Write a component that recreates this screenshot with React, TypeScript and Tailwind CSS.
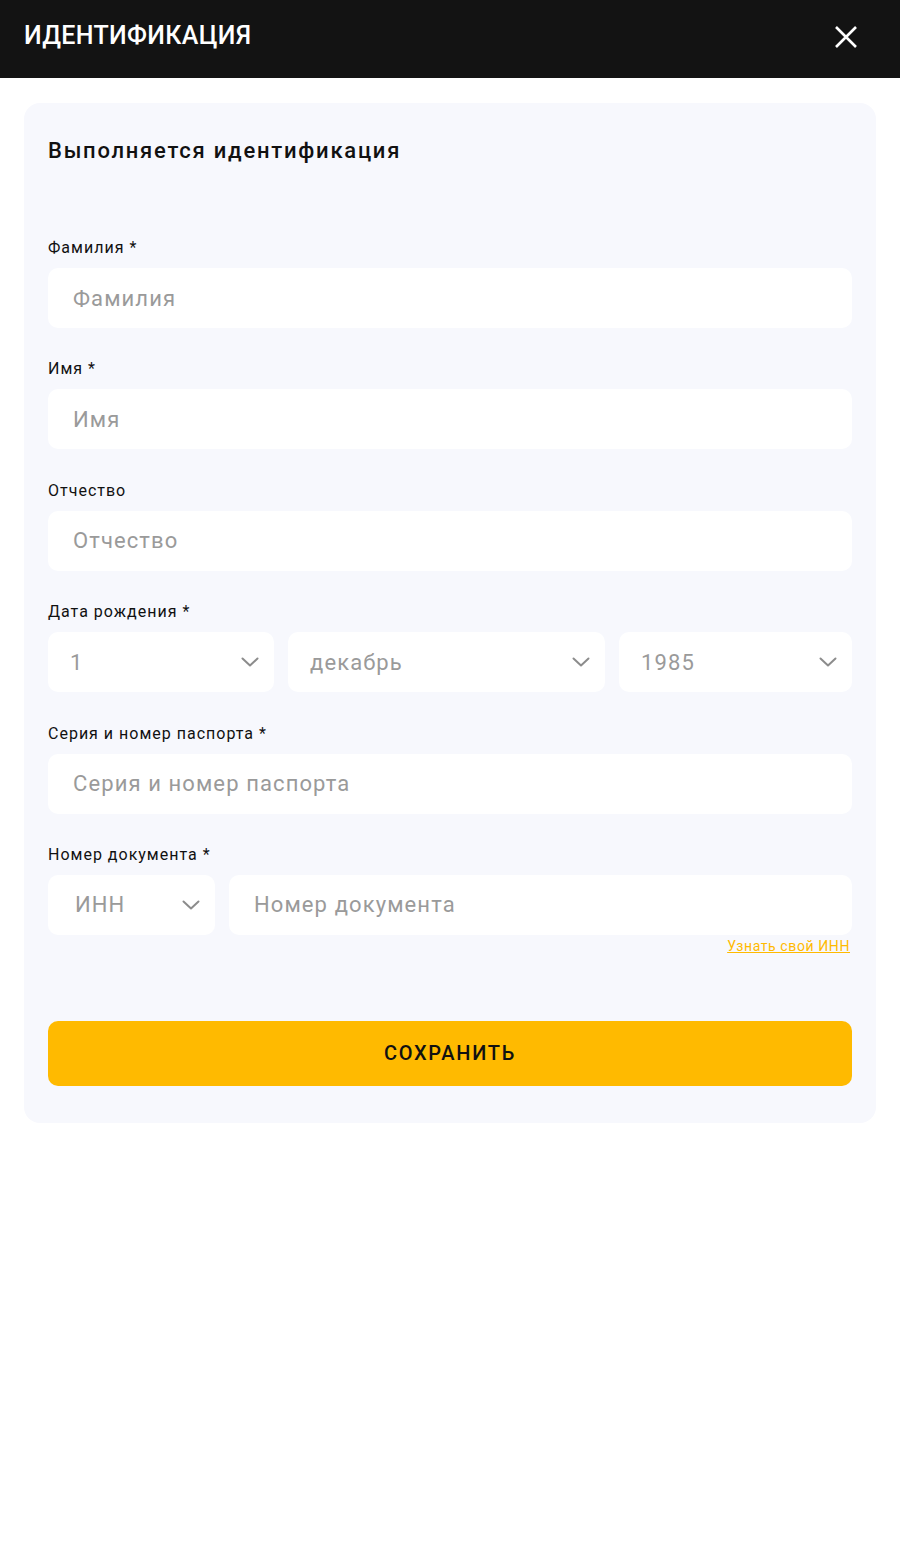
import React from "react";

const Chevron = () => (
  <svg width="18" height="18" viewBox="0 0 18 18" fill="none" className="shrink-0">
    <path d="M1.5 5.5L9 12.5L16.5 5.5" stroke="#8c8c8c" strokeWidth="2" strokeLinecap="round" strokeLinejoin="round" />
  </svg>
);

const Label = ({ children }: { children: React.ReactNode }) => (
  <label className="text-[16px] leading-[20px] tracking-[1px] text-[#111] mb-[10px]">{children}</label>
);

const Field = ({ label, placeholder }: { label: string; placeholder: string }) => (
  <div className="flex flex-col">
    <Label>{label}</Label>
    <div className="h-[60px] bg-white rounded-[10px] flex items-center px-[25px]">
      <span className="text-[22px] tracking-[1.1px] text-[#9a9a9a]">{placeholder}</span>
    </div>
  </div>
);

const Select = ({ value, className, pl = "pl-[22px]" }: { value: string; className: string; pl?: string }) => (
  <div className={`h-[60px] bg-white rounded-[10px] flex items-center justify-between pr-[15px] ${pl} ${className}`}>
    <span className="text-[22px] tracking-[1.1px] text-[#9a9a9a]">{value}</span>
    <Chevron />
  </div>
);

export default function App() {
  return (
    <div className="min-h-[1562px] bg-white" style={{ fontFamily: "Roboto, 'Liberation Sans', sans-serif" }}>
      <header className="h-[78px] bg-[#131313] flex items-center justify-between pl-[24px] pr-[42px]">
        <h1 className="text-white text-[25px] font-medium tracking-[0.35px] -mt-[6px]">ИДЕНТИФИКАЦИЯ</h1>
        <svg width="24" height="24" viewBox="0 0 24 24" fill="none" className="-mt-[4px]">
          <path d="M2 2L22 22M22 2L2 22" stroke="white" strokeWidth="2.6" />
        </svg>
      </header>

      <main className="px-[24px] pt-[25px]">
        <div className="bg-[#f7f8fd] rounded-[16px] px-[24px] pt-[33px] pb-[37px]">
          <h2 className="text-[22px] leading-[30px] font-medium text-[#111] tracking-[1.75px] mb-[73px]">
            Выполняется идентификация
          </h2>

          <div className="flex flex-col gap-[31.4px] -mt-[1px]">
            <Field label="Фамилия *" placeholder="Фамилия" />
            <Field label="Имя *" placeholder="Имя" />
            <Field label="Отчество" placeholder="Отчество" />

            <div className="flex flex-col">
              <Label>Дата рождения *</Label>
              <div className="flex gap-[14px]">
                <Select value="1" className="w-[226px]" />
                <Select value="декабрь" className="flex-1" />
                <Select value="1985" className="w-[233px]" />
              </div>
            </div>

            <Field label="Серия и номер паспорта *" placeholder="Серия и номер паспорта" />

            <div className="flex flex-col">
              <Label>Номер документа *</Label>
              <div className="flex gap-[14px]">
                <Select value="ИНН" className="w-[167px]" pl="pl-[27px]" />
                <div className="flex-1 h-[60px] bg-white rounded-[10px] flex items-center px-[25px]">
                  <span className="text-[22px] tracking-[1.1px] text-[#9a9a9a]">Номер документа</span>
                </div>
              </div>
              <div className="flex justify-end pr-[2px] mt-[1px]">
                <a className="text-[14px] leading-[20px] tracking-[0.6px] text-[#ffba00] underline">Узнать свой ИНН</a>
              </div>
            </div>
          </div>

          <button className="mt-[65px] w-full h-[65px] bg-[#ffba00] rounded-[10px] text-[20px] font-medium tracking-[1.7px] text-[#111]">
            СОХРАНИТЬ
          </button>
        </div>
      </main>
    </div>
  );
}
